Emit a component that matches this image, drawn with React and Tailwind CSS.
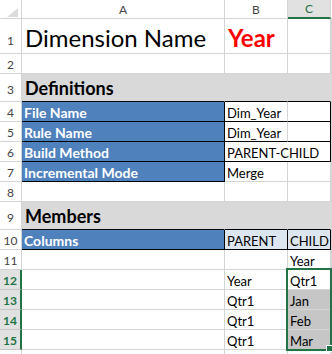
import React from "react";

// Gridline and fill classes shared by the sheet cells
const grid = "border-r border-b border-[#d4d4d4]";
const txt = "text-[13px] leading-[16px]";
const bold = "text-[14px] leading-[17px]";
const blueCell =
  "bg-[#4f81bd] text-white font-bold border-r border-b border-black";

function ColHead({ w, sel, children }) {
  return (
    <div
      className={`${w} shrink-0 flex items-end justify-center pb-[1px] text-[12px] leading-[14px] border-r border-b ${
        sel
          ? "bg-[#e1e1e1] text-[#217346] border-r-[#d4d4d4] border-b-2 border-b-[#217346]"
          : "bg-white text-[#444444] border-[#d4d4d4]"
      }`}
    >
      {children}
    </div>
  );
}

function RowHead({ n, pad = "pb-[1px]", sel }) {
  return (
    <div
      className={`w-[22px] shrink-0 flex items-end justify-center text-[12px] leading-[14px] border-b ${pad} ${
        sel
          ? "bg-[#e1e1e1] text-[#217346] font-bold border-r-2 border-r-[#217346] border-b-[#c6c6c6]"
          : "bg-white text-[#444444] border-r border-[#d4d4d4]"
      }`}
    >
      {n}
    </div>
  );
}

function Cell({ w, cls = "", children }) {
  return (
    <div
      className={`${w} shrink-0 flex items-end whitespace-nowrap overflow-visible pl-[2px] ${cls}`}
    >
      {children}
    </div>
  );
}

function Rest({ cls = grid }) {
  return <div className={`flex-1 ${cls}`} />;
}

export default function App() {
  return (
    <div className="relative w-[332px] h-[354px] overflow-hidden bg-white text-black font-['Lato',sans-serif]">
      {/* column headers */}
      <div className="flex h-[19px]">
        <div className="w-[22px] shrink-0 flex items-end justify-end pr-[3px] pb-[1px] bg-white border-r border-b border-[#d4d4d4]">
          <svg width="11" height="9" viewBox="0 0 11 9">
            <path d="M11 0 L11 9 L0 9 Z" fill="#dcdcdc" />
          </svg>
        </div>
        <ColHead w="w-[203px]">A</ColHead>
        <ColHead w="w-[63px]">B</ColHead>
        <ColHead w="w-[43px]" sel>
          C
        </ColHead>
        <div className="flex-1 bg-white border-b border-[#d4d4d4]" />
      </div>

      {/* 1: title */}
      <div className="flex h-[35px]">
        <RowHead n="1" pad="pb-[5px]" />
        <Cell w="w-[203px]" cls={`${grid} pl-[3px] pb-[1px] text-[24px] leading-[29px]`}>
          Dimension Name
        </Cell>
        <Cell
          w="w-[63px]"
          cls={`${grid} pl-[3px] pb-[1px] text-[24px] leading-[29px] font-bold text-[#ff0000]`}
        >
          Year
        </Cell>
        <Cell w="w-[43px]" cls={grid} />
        <Rest />
      </div>

      {/* 2 */}
      <div className="flex h-[20px]">
        <RowHead n="2" />
        <Cell w="w-[203px]" cls={grid} />
        <Cell w="w-[63px]" cls={grid} />
        <Cell w="w-[43px]" cls={grid} />
        <Rest />
      </div>

      {/* 3: Definitions band */}
      <div className="flex h-[28px]">
        <RowHead n="3" pad="pb-[4px]" />
        <Cell
          w="w-[203px]"
          cls="bg-[#d9d9d9] border-r border-b border-r-[#d9d9d9] border-b-black text-[18px] leading-[22px] font-bold pl-[3px] pb-[2px]"
        >
          Definitions
        </Cell>
        <Cell w="w-[63px]" cls="bg-[#d9d9d9] border-r border-b border-r-[#d9d9d9] border-b-black" />
        <Cell w="w-[43px]" cls="bg-[#d9d9d9] border-r border-b border-r-[#d9d9d9] border-b-black" />
        <Rest cls="bg-[#d9d9d9] border-b border-[#d4d4d4]" />
      </div>

      {/* 4 */}
      <div className="flex h-[20px]">
        <RowHead n="4" />
        <Cell w="w-[203px]" cls={`${blueCell} ${bold}`}>
          File Name
        </Cell>
        <Cell w="w-[63px]" cls={`border-r border-b border-r-[#d4d4d4] border-b-black ${txt}`}>
          Dim_Year
        </Cell>
        <Cell w="w-[43px]" cls="border-r border-b border-black" />
        <Rest />
      </div>

      {/* 5 */}
      <div className="flex h-[20px]">
        <RowHead n="5" />
        <Cell w="w-[203px]" cls={`${blueCell} ${bold}`}>
          Rule Name
        </Cell>
        <Cell w="w-[63px]" cls={`border-r border-b border-r-[#d4d4d4] border-b-black ${txt}`}>
          Dim_Year
        </Cell>
        <Cell w="w-[43px]" cls="border-r border-b border-black" />
        <Rest />
      </div>

      {/* 6 */}
      <div className="flex h-[20px]">
        <RowHead n="6" />
        <Cell w="w-[203px]" cls={`${blueCell} ${bold}`}>
          Build Method
        </Cell>
        <Cell w="w-[106px]" cls={`border-r border-b border-black ${txt}`}>
          PARENT-CHILD
        </Cell>
        <Rest />
      </div>

      {/* 7 */}
      <div className="flex h-[20px]">
        <RowHead n="7" />
        <Cell w="w-[203px]" cls={`${blueCell} ${bold}`}>
          Incremental Mode
        </Cell>
        <Cell w="w-[63px]" cls={`${grid} ${txt}`}>
          Merge
        </Cell>
        <Cell w="w-[43px]" cls={grid} />
        <Rest />
      </div>

      {/* 8 */}
      <div className="flex h-[20px]">
        <RowHead n="8" />
        <Cell w="w-[203px]" cls={grid} />
        <Cell w="w-[63px]" cls={grid} />
        <Cell w="w-[43px]" cls={grid} />
        <Rest />
      </div>

      {/* 9: Members band */}
      <div className="flex h-[28px]">
        <RowHead n="9" pad="pb-[4px]" />
        <Cell
          w="w-[203px]"
          cls="bg-[#d9d9d9] border-r border-b border-r-[#d9d9d9] border-b-black text-[18px] leading-[22px] font-bold pl-[3px] pb-[2px]"
        >
          Members
        </Cell>
        <Cell w="w-[63px]" cls="bg-[#d9d9d9] border-r border-b border-r-[#d9d9d9] border-b-black" />
        <Cell w="w-[43px]" cls="bg-[#d9d9d9] border-r border-b border-r-[#d9d9d9] border-b-black" />
        <Rest cls="bg-[#d9d9d9] border-b border-[#d4d4d4]" />
      </div>

      {/* 10 */}
      <div className="flex h-[20px]">
        <RowHead n="10" />
        <Cell w="w-[203px]" cls={`${blueCell} ${bold}`}>
          Columns
        </Cell>
        <Cell w="w-[63px]" cls={`bg-[#dce6f1] border-r border-b border-black ${txt}`}>
          PARENT
        </Cell>
        <Cell w="w-[43px]" cls={`bg-[#dce6f1] border-r border-b border-black ${txt}`}>
          CHILD
        </Cell>
        <Rest />
      </div>

      {/* 11 */}
      <div className="flex h-[20px]">
        <RowHead n="11" />
        <Cell w="w-[203px]" cls={grid} />
        <Cell w="w-[63px]" cls={grid} />
        <Cell w="w-[43px]" cls={`${grid} ${txt}`}>
          Year
        </Cell>
        <Rest />
      </div>

      {/* 12 */}
      <div className="flex h-[20px]">
        <RowHead n="12" sel />
        <Cell w="w-[203px]" cls={grid} />
        <Cell w="w-[63px]" cls={`${grid} ${txt}`}>
          Year
        </Cell>
        <Cell w="w-[43px]" cls={`${grid} ${txt}`}>
          Qtr1
        </Cell>
        <Rest />
      </div>

      {/* 13 */}
      <div className="flex h-[20px]">
        <RowHead n="13" sel />
        <Cell w="w-[203px]" cls={grid} />
        <Cell w="w-[63px]" cls={`${grid} ${txt}`}>
          Qtr1
        </Cell>
        <Cell w="w-[43px]" cls={`${grid} bg-[#c6c6c6] ${txt}`}>
          Jan
        </Cell>
        <Rest />
      </div>

      {/* 14 */}
      <div className="flex h-[20px]">
        <RowHead n="14" sel />
        <Cell w="w-[203px]" cls={grid} />
        <Cell w="w-[63px]" cls={`${grid} ${txt}`}>
          Qtr1
        </Cell>
        <Cell w="w-[43px]" cls={`${grid} bg-[#c6c6c6] ${txt}`}>
          Feb
        </Cell>
        <Rest />
      </div>

      {/* 15 */}
      <div className="flex h-[20px]">
        <RowHead n="15" sel />
        <Cell w="w-[203px]" cls={grid} />
        <Cell w="w-[63px]" cls={`${grid} ${txt}`}>
          Qtr1
        </Cell>
        <Cell w="w-[43px]" cls={`${grid} bg-[#c6c6c6] ${txt}`}>
          Mar
        </Cell>
        <Rest />
      </div>

      {/* 16 (partly visible) */}
      <div className="flex h-[20px]">
        <RowHead n="" />
        <Cell w="w-[203px]" cls={grid} />
        <Cell w="w-[63px]" cls={grid} />
        <Cell w="w-[43px]" cls={grid} />
        <Rest />
      </div>

      {/* selection outline over C12:C15 with fill handle */}
      <div className="pointer-events-none absolute left-[286px] top-[268px] w-[46px] h-[83px] border-2 border-[#217346]" />
      <div className="pointer-events-none absolute left-[326px] top-[345px] w-[7px] h-[7px] bg-[#217346] border border-white" />
    </div>
  );
}
